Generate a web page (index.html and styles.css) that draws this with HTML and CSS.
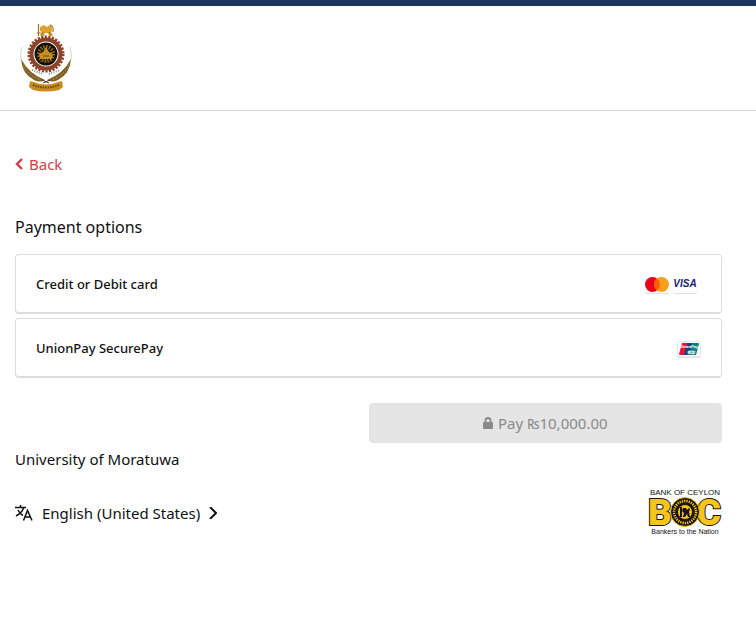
FILE: index.html
```
<!DOCTYPE html>
<html lang="en">
<head>
    <meta charset="utf-8">
    <meta name="viewport" content="width=device-width, initial-scale=1">
    <title>Payment options</title>
    <link rel="stylesheet" href="styles.css">
</head>
<body>
    <header class="header">
        <svg class="crest" viewBox="0 0 60 75" role="img" aria-label="University of Moratuwa crest">
            <!-- lion -->
            <path d="M22.5 4v12M21 13h4" stroke="#9a7428" stroke-width="1.2" fill="none"/>
            <path d="M24 7l4-2 3 2 3-2 2 1v5l-1 1 2 4h-4l-1-3h-3l-1 3h-4l2-4-2-1z" fill="#dca22c"/>
            <path d="M34 5q4 0 3 7M27 12l-2 3M33 12l2 3" stroke="#8a6420" stroke-width="1" fill="none"/>
            <!-- gear -->
            <circle cx="30" cy="34" r="17" fill="none" stroke="#8b432a" stroke-width="3" stroke-dasharray="2.2 1.36"/>
            <circle cx="30" cy="34" r="14.5" fill="#fff" stroke="#8b432a" stroke-width="4"/>
            <circle cx="30" cy="34" r="11.5" fill="#15100b"/>
            <circle cx="30" cy="34" r="7" fill="none" stroke="#a87820" stroke-width="4" stroke-dasharray="1.2 1.55"/>
            <path d="M30 27l3 5 4 2-1 5H24l-1-5 4-2z" fill="#c78f22"/>
            <path d="M24 41h12M27 36h6" stroke="#6f4c15" stroke-width="1" fill="none"/>
            <!-- wheat -->
            <path d="M6 27Q4 33 5 40M54 27Q56 33 55 40" stroke="#d5d2cf" stroke-width="1" fill="none"/>
            <path d="M5 39Q13 54 29 60Q24 63 18 60Q6 54 5 39M55 39Q47 54 31 60Q36 63 42 60Q54 54 55 39" fill="#806024"/>
            <path d="M7 45Q12 56 25 60M53 45Q48 56 35 60" stroke="#d3b46c" stroke-width="1" stroke-dasharray="1 2" fill="none"/>
            <path d="M16 50l11 4M33 54l11-4" stroke="#8c8a86" stroke-width="2" stroke-dasharray="1 1.4" fill="none"/>
            <path d="M26 60l7 3M34 60l-7 3" stroke="#4e3c1d" stroke-width="1" fill="none"/>
            <!-- ribbon -->
            <path d="M14 61l4 1Q30 67 42 62l4-1 1 6-4 3Q30 73 17 70l-4-3z" fill="#c78c1d"/>
            <path d="M17 65Q30 70 43 65" stroke="#6b4a16" stroke-width="2" stroke-dasharray="1.5 1" fill="none"/>
        </svg>
    </header>

    <main class="page">
        <a href="#" class="back">
            <svg class="back-icon" viewBox="0 0 8 12" aria-hidden="true"><path d="M7 1L2 6l5 5"/></svg>
            Back
        </a>

        <h1 class="title">Payment options</h1>

        <div class="options">
            <button type="button" class="option">
                <span>Credit or Debit card</span>
                <span class="brands">
                    <svg class="brand" viewBox="0 0 24 18" role="img" aria-label="Mastercard">
                        <circle cx="7.5" cy="9.5" r="7.5" fill="#eb001b"/>
                        <circle cx="16.5" cy="9.5" r="7.5" fill="#f79e1b"/>
                        <path d="M12 3.5a7.5 7.5 0 0 1 0 12a7.5 7.5 0 0 1 0-12" fill="#ff5f00"/>
                    </svg>
                    <svg class="brand" viewBox="0 0 24 18" role="img" aria-label="Visa">
                        <text class="visa" x="12" y="12" text-anchor="middle">VISA</text>
                    </svg>
                </span>
            </button>
            <button type="button" class="option option-unionpay">
                <span>UnionPay SecurePay</span>
                <span class="brands">
                    <svg class="brand brand-framed" viewBox="0 0 24 16" role="img" aria-label="UnionPay">
                        <path d="M5 2h6L8 14H3q-1 0-1-1z" fill="#e21836"/>
                        <path d="M10 2h6l-3 12H7z" fill="#15457c"/>
                        <path d="M15 2h6q1 0 1 1l-3 11h-7z" fill="#087f80"/>
                        <text class="unionpay" x="12" y="7" text-anchor="middle">UnionPay</text>
                        <text class="unionpay" x="14" y="13" text-anchor="middle">银联</text>
                    </svg>
                </span>
            </button>
        </div>

        <div class="actions">
            <button type="submit" class="pay" disabled>
                <svg class="lock" viewBox="0 0 10 12" aria-hidden="true">
                    <path d="M2.5 6V3.5a2.5 2.5 0 0 1 5 0V6" fill="none" stroke="currentColor" stroke-width="1.8"/>
                    <rect y="5" width="10" height="7" rx="1" fill="currentColor"/>
                </svg>
                Pay ₨10,000.00
            </button>
        </div>

        <footer class="footer">
            <div>
                <p class="merchant">University of Moratuwa</p>
                <button type="button" class="language">
                    <svg class="translate" viewBox="0 0 18 16" aria-hidden="true">
                        <path d="M0 2.5h11M5.5 0v2.5M8.7 2.5Q7 8 1 11M3 5q2 4 5 5.5M8.5 15.5l4-10 4.5 10M10 12h6"/>
                    </svg>
                    English (United States)
                    <svg class="chevron" viewBox="0 0 8 12" aria-hidden="true"><path d="M1 0l6 6-6 6"/></svg>
                </button>
            </div>
            <svg class="bank" viewBox="0 0 74 50" role="img" aria-label="Bank of Ceylon">
                <text class="bank-name" x="37" y="8" text-anchor="middle">BANK OF CEYLON</text>
                <text class="bank-letter" x="0" y="38">B</text>
                <text class="bank-letter" x="73" y="38" text-anchor="end">C</text>
                <circle cx="37" cy="25" r="14.5" fill="#18140a" stroke="#f5c51b" stroke-width="1"/>
                <circle cx="37" cy="25" r="11" fill="none" stroke="#f5c51b" stroke-width="2.5" stroke-dasharray="1.3 1"/>
                <circle cx="37" cy="25" r="7.5" fill="#f5c51b" stroke="#18140a" stroke-width="1"/>
                <path d="M32 20h2v10h-2zM35 21h3l1 2 2-2 1 1-1 3 1 5h-2l-1-3-2 3h-2l1-4-2-2z" fill="#18140a"/>
                <text class="bank-motto" x="37" y="47" text-anchor="middle">Bankers to the Nation</text>
            </svg>
        </footer>
    </main>
</body>
</html>
```
FILE: styles.css
```
* {
    box-sizing: border-box;
}
body {
    margin: 0;
    font-family: "Noto Sans", "Noto Sans CJK SC", sans-serif;
    font-size: 15px;
    line-height: 24px;
    color: #111;
    background-color: #fff;
}
button {
    font: inherit;
    color: inherit;
}
svg {
    display: block;
    flex: none;
}
.header {
    padding: 14px 16px 15px;
    border-top: 6px solid #1b365d;
    border-bottom: 1px solid #d6d6d6;
}
.crest {
    width: 60px;
    height: 75px;
}
.page {
    padding: 41px 34px 20px 15px;
}
.back {
    display: inline-flex;
    align-items: center;
    gap: 6px;
    color: #d13c46;
    text-decoration: none;
}
.back-icon {
    width: 8px;
    height: 12px;
    fill: none;
    stroke: currentColor;
    stroke-width: 2.4;
}
.title {
    margin: 39px 0 15px;
    font-size: 16px;
    font-weight: 400;
    line-height: 24px;
}
.options {
    display: flex;
    flex-direction: column;
    gap: 4px;
}
.option {
    display: flex;
    align-items: center;
    justify-content: space-between;
    width: 100%;
    height: 60px;
    padding: 0 24px 0 20px;
    border: 1px solid #dedede;
    border-bottom-width: 2px;
    border-radius: 4px;
    background-color: #fff;
    font-size: 13px;
    font-weight: 500;
    text-align: left;
    cursor: pointer;
}
.option-unionpay {
    padding-right: 20px;
}
.brands {
    display: flex;
    gap: 4px;
}
.brand {
    width: 24px;
    height: 18px;
    border-radius: 2px;
    box-shadow: 0 1px 1px #ddd;
}
.brand-framed {
    height: 16px;
    margin-top: 3px;
    outline: 1px solid #e9e9e9;
    outline-offset: -1px;
}
.visa {
    font: italic 700 10px "Liberation Sans", sans-serif;
    fill: #1a1f71;
}
.unionpay {
    font: italic 700 4px "Noto Sans", "Noto Sans CJK SC", sans-serif;
    fill: #fff;
}
.actions {
    display: grid;
    grid-template-columns: 1fr 1fr;
    margin-top: 25px;
}
.pay {
    grid-column: 2;
    display: flex;
    align-items: center;
    justify-content: center;
    gap: 5px;
    height: 40px;
    border: 0;
    border-radius: 4px;
    background-color: #e5e5e5;
    color: #8a8a8a;
}
.lock {
    width: 10px;
    height: 12px;
}
.footer {
    display: flex;
    align-items: flex-end;
    justify-content: space-between;
    margin-top: 4px;
}
.merchant {
    margin: 0 0 30px;
}
.language {
    display: flex;
    align-items: center;
    padding: 0;
    margin-bottom: 12px;
    border: 0;
    background: none;
    cursor: pointer;
}
.translate {
    width: 18px;
    height: 16px;
    margin-right: 9px;
    fill: none;
    stroke: currentColor;
    stroke-width: 1.5;
}
.chevron {
    width: 8px;
    height: 12px;
    margin-left: 9px;
    fill: none;
    stroke: currentColor;
    stroke-width: 2;
}
.bank {
    width: 74px;
    height: 50px;
}
.bank-name {
    font: 8px "Liberation Sans", sans-serif;
    fill: #111;
}
.bank-motto {
    font: 7px "Liberation Sans", sans-serif;
    fill: #111;
}
.bank-letter {
    font: 900 37px Roboto, sans-serif;
    fill: #f5c51b;
    stroke: #18140a;
    stroke-width: 2;
    paint-order: stroke;
}
```
